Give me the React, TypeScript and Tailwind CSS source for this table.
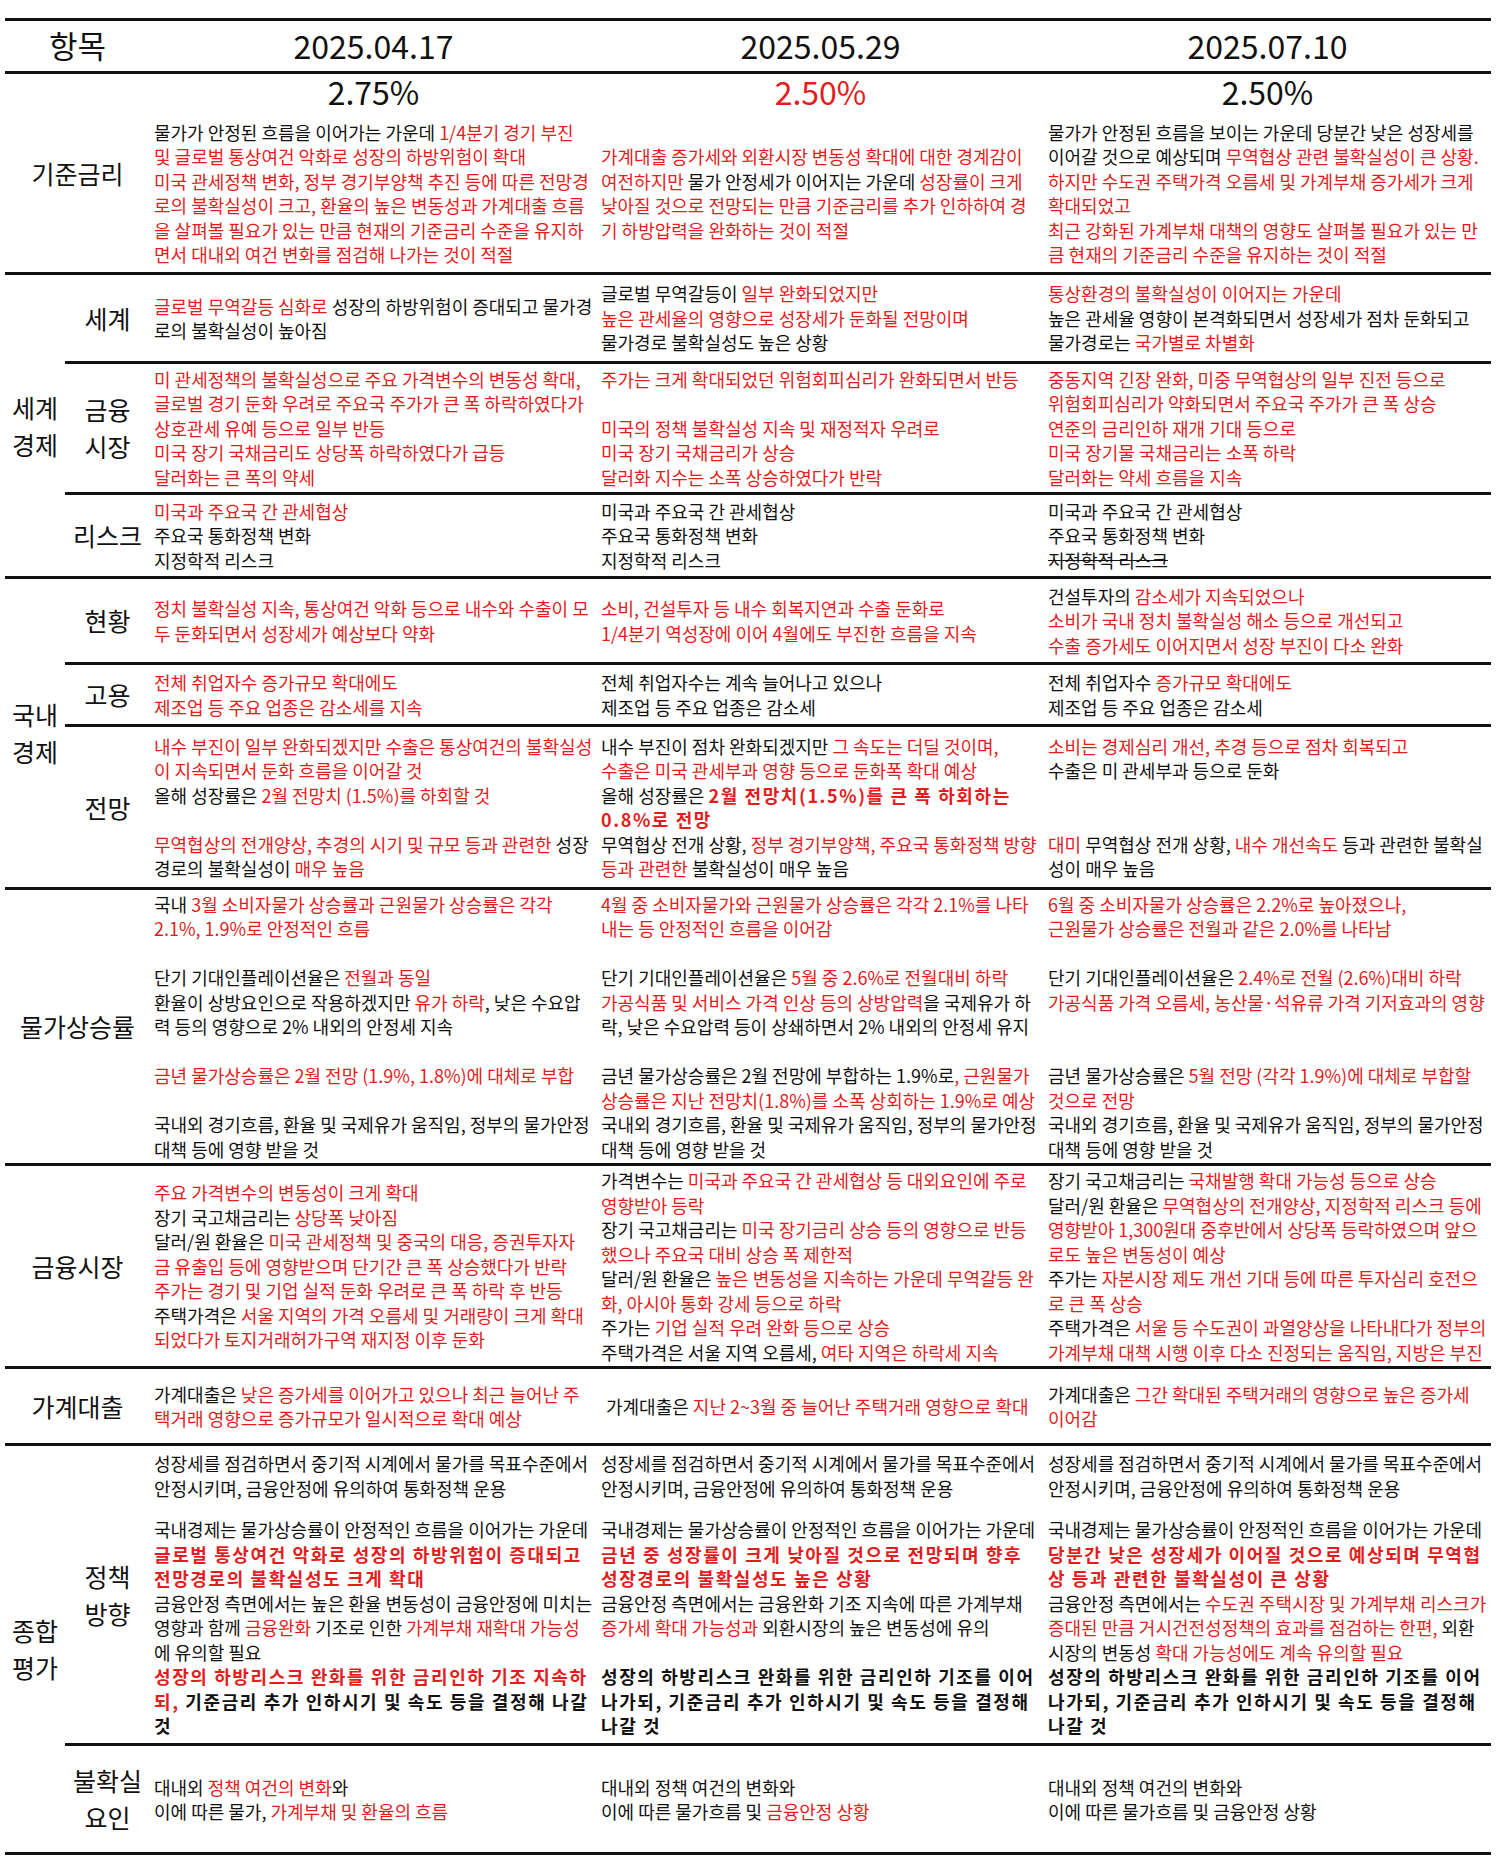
import React from "react";
import clsx from "clsx";

// {red}  《bold red》  【bold black】  「strike」   "" = empty line, "_" = small gap
const parse = (s: string) =>
  s
    .split(/(\{[^}]*\}|《[^》]*》|【[^】]*】|「[^」]*」)/g)
    .filter((p) => p !== "")
    .map((p) => {
      if (p.startsWith("{")) return { t: p.slice(1, -1), red: true };
      if (p.startsWith("《")) return { t: p.slice(1, -1), red: true, bold: true };
      if (p.startsWith("【")) return { t: p.slice(1, -1), bold: true };
      if (p.startsWith("「")) return { t: p.slice(1, -1), strike: true };
      return { t: p };
    });

const TextLine = ({ s }: { s: string }) => {
  if (s === "") return <div className="h-[24.5px]" />;
  if (s === "_") return <div className="h-[17px]" />;
  return (
    <div className="whitespace-pre leading-[24.5px]">
      {parse(s).map((seg, i) => (
        <span
          key={i}
          className={clsx(
            seg.red && "text-[#e31d1d]",
            seg.bold && "font-bold tracking-[1.6px]",
            seg.strike && "line-through"
          )}
        >
          {seg.t}
        </span>
      ))}
    </div>
  );
};

const Cell = ({ lines, className }: { lines: string[]; className?: string }) => (
  <div className={clsx("flex flex-col justify-center pl-[4px]", className)}>
    {lines.map((l, i) => (
      <TextLine key={i} s={l} />
    ))}
  </div>
);

const Label = ({ children }: { children: React.ReactNode }) => (
  <div className="flex items-center justify-center text-center text-[25px] leading-[37px]">
    {children}
  </div>
);

type Sub = { label: React.ReactNode; h: string; cols: string[][]; last?: boolean };

const SubRow = ({ row }: { row: Sub }) => (
  <div
    className={clsx(
      "grid grid-cols-[85px_repeat(3,447px)]",
      row.h,
      !row.last && "border-b-[3px] border-[#111]"
    )}
  >
    <Label>{row.label}</Label>
    {row.cols.map((c, i) => (
      <Cell key={i} lines={c} />
    ))}
  </div>
);

const Group = ({ label, rows }: { label: React.ReactNode; rows: Sub[] }) => (
  <div className="grid grid-cols-[60px_1fr] border-b-[3px] border-[#111]">
    <Label>{label}</Label>
    <div className="flex flex-col">
      {rows.map((r, i) => (
        <SubRow key={i} row={r} />
      ))}
    </div>
  </div>
);

const Single = ({ label, h, cols }: { label: string; h: string; cols: string[][] }) => (
  <div className={clsx("grid grid-cols-[145px_repeat(3,447px)] border-b-[3px] border-[#111]", h)}>
    <Label>{label}</Label>
    {cols.map((c, i) => (
      <Cell key={i} lines={c} className={i === 1 && label === "가계대출" ? "pl-[9px]" : undefined} />
    ))}
  </div>
);

const world: Sub[] = [
  {
    label: "세계",
    h: "h-[89px]",
    cols: [
      ["{글로벌 무역갈등 심화로} 성장의 하방위험이 증대되고 물가경", "로의 불확실성이 높아짐"],
      ["글로벌 무역갈등이 {일부 완화되었지만}", "{높은 관세율의 영향으로 성장세가 둔화될 전망이며}", "물가경로 불확실성도 높은 상황"],
      ["{통상환경의 불확실성이 이어지는 가운데}", "높은 관세율 영향이 본격화되면서 성장세가 점차 둔화되고", "물가경로는 {국가별로 차별화}"],
    ],
  },
  {
    label: (
      <>
        금융
        <br />
        시장
      </>
    ),
    h: "h-[131px]",
    cols: [
      [
        "{미 관세정책의 불확실성으로 주요 가격변수의 변동성 확대,}",
        "{글로벌 경기 둔화 우려로 주요국 주가가 큰 폭 하락하였다가}",
        "{상호관세 유예 등으로 일부 반등}",
        "{미국 장기 국채금리도 상당폭 하락하였다가 급등}",
        "{달러화는 큰 폭의 약세}",
      ],
      [
        "{주가는 크게 확대되었던 위험회피심리가 완화되면서 반등}",
        "",
        "{미국의 정책 불확실성 지속 및 재정적자 우려로}",
        "{미국 장기 국채금리가 상승}",
        "{달러화 지수는 소폭 상승하였다가 반락}",
      ],
      [
        "{중동지역 긴장 완화, 미중 무역협상의 일부 진전 등으로}",
        "{위험회피심리가 약화되면서 주요국 주가가 큰 폭 상승}",
        "{연준의 금리인하 재개 기대 등으로}",
        "{미국 장기물 국채금리는 소폭 하락}",
        "{달러화는 약세 흐름을 지속}",
      ],
    ],
  },
  {
    label: "리스크",
    h: "h-[81px]",
    last: true,
    cols: [
      ["{미국과 주요국 간 관세협상}", "주요국 통화정책 변화", "지정학적 리스크"],
      ["미국과 주요국 간 관세협상", "주요국 통화정책 변화", "지정학적 리스크"],
      ["미국과 주요국 간 관세협상", "주요국 통화정책 변화", "「지정학적 리스크」"],
    ],
  },
];

const domestic: Sub[] = [
  {
    label: "현황",
    h: "h-[86px]",
    cols: [
      ["{정치 불확실성 지속, 통상여건 악화 등으로 내수와 수출이 모}", "{두 둔화되면서 성장세가 예상보다 약화}"],
      ["{소비, 건설투자 등 내수 회복지연과 수출 둔화로}", "{1/4분기 역성장에 이어 4월에도 부진한 흐름을 지속}"],
      ["건설투자의 {감소세가 지속되었으나}", "{소비가 국내 정치 불확실성 해소 등으로 개선되고}", "{수출 증가세도 이어지면서 성장 부진이 다소 완화}"],
    ],
  },
  {
    label: "고용",
    h: "h-[62px]",
    cols: [
      ["{전체 취업자수 증가규모 확대에도}", "{제조업 등 주요 업종은 감소세를 지속}"],
      ["전체 취업자수는 계속 늘어나고 있으나", "제조업 등 주요 업종은 감소세"],
      ["전체 취업자수 {증가규모 확대에도}", "제조업 등 주요 업종은 감소세"],
    ],
  },
  {
    label: "전망",
    h: "h-[160px]",
    last: true,
    cols: [
      [
        "{내수 부진이 일부 완화되겠지만 수출은 통상여건의 불확실성}",
        "{이 지속되면서 둔화 흐름을 이어갈 것}",
        "올해 성장률은 {2월 전망치 (1.5%)를 하회할 것}",
        "",
        "{무역협상의 전개양상, 추경의 시기 및 규모 등과 관련한} 성장",
        "경로의 불확실성이 {매우 높음}",
      ],
      [
        "내수 부진이 점차 완화되겠지만 {그 속도는 더딜 것이며,}",
        "{수출은 미국 관세부과 영향 등으로 둔화폭 확대 예상}",
        "올해 성장률은 《2월 전망치(1.5%)를 큰 폭 하회하는》",
        "《0.8%로 전망》",
        "무역협상 전개 상황, {정부 경기부양책, 주요국 통화정책 방향}",
        "{등과 관련한} 불확실성이 매우 높음",
      ],
      [
        "{소비는 경제심리 개선, 추경 등으로 점차 회복되고}",
        "수출은 미 관세부과 등으로 둔화",
        "",
        "",
        "{대미} 무역협상 전개 상황, {내수 개선속도} 등과 관련한 불확실",
        "성이 매우 높음",
      ],
    ],
  },
];

const prices = [
  [
    "국내 {3월 소비자물가 상승률과 근원물가 상승률은 각각}",
    "{2.1%, 1.9%로 안정적인 흐름}",
    "",
    "단기 기대인플레이션율은 {전월과 동일}",
    "환율이 상방요인으로 작용하겠지만 {유가 하락}, 낮은 수요압",
    "력 등의 영향으로 2% 내외의 안정세 지속",
    "",
    "{금년 물가상승률은 2월 전망 (1.9%, 1.8%)에 대체로 부합}",
    "",
    "국내외 경기흐름, 환율 및 국제유가 움직임, 정부의 물가안정",
    "대책 등에 영향 받을 것",
  ],
  [
    "{4월 중 소비자물가와 근원물가 상승률은 각각 2.1%를 나타}",
    "{내는 등 안정적인 흐름을 이어감}",
    "",
    "단기 기대인플레이션율은 {5월 중 2.6%로 전월대비 하락}",
    "{가공식품 및 서비스 가격 인상 등의 상방압력}을 국제유가 하",
    "락, 낮은 수요압력 등이 상쇄하면서 2% 내외의 안정세 유지",
    "",
    "금년 물가상승률은 2월 전망에 부합하는 1.9%로{, 근원물가}",
    "{상승률은 지난 전망치(1.8%)를 소폭 상회하는 1.9%로 예상}",
    "국내외 경기흐름, 환율 및 국제유가 움직임, 정부의 물가안정",
    "대책 등에 영향 받을 것",
  ],
  [
    "{6월 중 소비자물가 상승률은 2.2%로 높아졌으나,}",
    "{근원물가 상승률은 전월과 같은 2.0%를 나타남}",
    "",
    "단기 기대인플레이션율은 {2.4%로 전월 (2.6%)대비 하락}",
    "{가공식품 가격 오름세, 농산물·석유류 가격 기저효과의 영향}",
    "",
    "",
    "금년 물가상승률은 {5월 전망 (각각 1.9%)에 대체로 부합할}",
    "{것으로 전망}",
    "국내외 경기흐름, 환율 및 국제유가 움직임, 정부의 물가안정",
    "대책 등에 영향 받을 것",
  ],
];

const markets = [
  [
    "{주요 가격변수의 변동성이 크게 확대}",
    "장기 국고채금리는 {상당폭 낮아짐}",
    "달러/원 환율은 {미국 관세정책 및 중국의 대응, 증권투자자}",
    "{금 유출입 등에 영향받으며 단기간 큰 폭 상승했다가 반락}",
    "{주가는 경기 및 기업 실적 둔화 우려로 큰 폭 하락 후 반등}",
    "주택가격은 {서울 지역의 가격 오름세 및 거래량이 크게 확대}",
    "{되었다가 토지거래허가구역 재지정 이후 둔화}",
  ],
  [
    "가격변수는 {미국과 주요국 간 관세협상 등 대외요인에 주로}",
    "{영향받아 등락}",
    "장기 국고채금리는 {미국 장기금리 상승 등의 영향으로 반등}",
    "{했으나 주요국 대비 상승 폭 제한적}",
    "달러/원 환율은 {높은 변동성을 지속하는 가운데 무역갈등 완}",
    "{화, 아시아 통화 강세 등으로 하락}",
    "주가는 {기업 실적 우려 완화 등으로 상승}",
    "주택가격은 서울 지역 오름세, {여타 지역은 하락세 지속}",
  ],
  [
    "장기 국고채금리는 {국채발행 확대 가능성 등으로 상승}",
    "달러/원 환율은 {무역협상의 전개양상, 지정학적 리스크 등에}",
    "{영향받아 1,300원대 중후반에서 상당폭 등락하였으며 앞으}",
    "{로도 높은 변동성이 예상}",
    "주가는 {자본시장 제도 개선 기대 등에 따른 투자심리 호전으}",
    "{로 큰 폭 상승}",
    "주택가격은 {서울 등 수도권이 과열양상을 나타내다가 정부의}",
    "{가계부채 대책 시행 이후 다소 진정되는 움직임, 지방은 부진}",
  ],
];

const loans = [
  ["가계대출은 {낮은 증가세를 이어가고 있으나 최근 늘어난 주}", "{택거래 영향으로 증가규모가 일시적으로 확대 예상}"],
  ["가계대출은 {지난 2~3월 중 늘어난 주택거래 영향으로 확대}"],
  ["가계대출은 {그간 확대된 주택거래의 영향으로 높은 증가세}", "{이어감}"],
];

const policyHead = [
  "성장세를 점검하면서 중기적 시계에서 물가를 목표수준에서",
  "안정시키며, 금융안정에 유의하여 통화정책 운용",
  "_",
  "국내경제는 물가상승률이 안정적인 흐름을 이어가는 가운데",
];

const overall: Sub[] = [
  {
    label: (
      <>
        정책
        <br />
        방향
      </>
    ),
    h: "h-[300px]",
    cols: [
      [
        ...policyHead,
        "《글로벌 통상여건 악화로 성장의 하방위험이 증대되고》",
        "《전망경로의 불확실성도 크게 확대》",
        "금융안정 측면에서는 높은 환율 변동성이 금융안정에 미치는",
        "영향과 함께 {금융완화} 기조로 인한 {가계부채 재확대 가능성}",
        "에 유의할 필요",
        "《성장의 하방리스크 완화를 위한 금리인하 기조 지속하》",
        "《되,》【 기준금리 추가 인하시기 및 속도 등을 결정해 나갈】",
        "【것】",
      ],
      [
        ...policyHead,
        "《금년 중 성장률이 크게 낮아질 것으로 전망되며 향후》",
        "《성장경로의 불확실성도 높은 상황》",
        "금융안정 측면에서는 금융완화 기조 지속에 따른 가계부채",
        "{증가세 확대 가능성과} 외환시장의 높은 변동성에 유의",
        "",
        "【성장의 하방리스크 완화를 위한 금리인하 기조를 이어】",
        "【나가되, 기준금리 추가 인하시기 및 속도 등을 결정해】",
        "【나갈 것】",
      ],
      [
        ...policyHead,
        "《당분간 낮은 성장세가 이어질 것으로 예상되며 무역협》",
        "《상 등과 관련한 불확실성이 큰 상황》",
        "금융안정 측면에서는 {수도권 주택시장 및 가계부채 리스크가}",
        "{증대된 만큼 거시건전성정책의 효과를 점검하는 한편,} 외환",
        "시장의 변동성 {확대 가능성에도 계속 유의할 필요}",
        "【성장의 하방리스크 완화를 위한 금리인하 기조를 이어】",
        "【나가되, 기준금리 추가 인하시기 및 속도 등을 결정해】",
        "【나갈 것】",
      ],
    ],
  },
  {
    label: (
      <>
        불확실
        <br />
        요인
      </>
    ),
    h: "h-[106px]",
    last: true,
    cols: [
      ["대내외 {정책 여건의 변화}와", "이에 따른 물가, {가계부채 및 환율의 흐름}"],
      ["대내외 정책 여건의 변화와", "이에 따른 물가흐름 및 {금융안정 상황}"],
      ["대내외 정책 여건의 변화와", "이에 따른 물가흐름 및 금융안정 상황"],
    ],
  },
];

export default function App() {
  return (
    <div className="min-h-screen bg-white pt-[18px] font-['Noto_Sans_CJK_KR',sans-serif] text-[18px] text-[#111]">
      <div className="ml-[5px] w-[1486px] border-t-[3px] border-[#111]">
        {/* header */}
        <div className="grid h-[53px] grid-cols-[145px_repeat(3,447px)] items-center border-b-[3px] border-[#111] pb-[7px] text-center">
          <div className="text-[31px]">항목</div>
          <div className="text-[32px]">2025.04.17</div>
          <div className="text-[32px]">2025.05.29</div>
          <div className="text-[32px]">2025.07.10</div>
        </div>

        {/* 기준금리 */}
        <div className="grid h-[201px] grid-cols-[145px_1fr] border-b-[3px] border-[#111]">
          <Label>기준금리</Label>
          <div className="flex flex-col">
            <div className="grid h-[40px] grid-cols-3 items-start pt-[1px] text-center text-[32px] leading-[32px]">
              <div>2.75%</div>
              <div className="text-[#e31d1d]">2.50%</div>
              <div>2.50%</div>
            </div>
            <div className="grid flex-1 grid-cols-3">
              <Cell
                lines={[
                  "물가가 안정된 흐름을 이어가는 가운데 {1/4분기 경기 부진}",
                  "{및 글로벌 통상여건 악화로 성장의 하방위험이 확대}",
                  "{미국 관세정책 변화, 정부 경기부양책 추진 등에 따른 전망경}",
                  "{로의 불확실성이 크고, 환율의 높은 변동성과 가계대출 흐름}",
                  "{을 살펴볼 필요가 있는 만큼 현재의 기준금리 수준을 유지하}",
                  "{면서 대내외 여건 변화를 점검해 나가는 것이 적절}",
                ]}
              />
              <Cell
                lines={[
                  "{가계대출 증가세와 외환시장 변동성 확대에 대한 경계감이}",
                  "{여전하지만} 물가 안정세가 이어지는 가운데 {성장률이 크게}",
                  "{낮아질 것으로 전망되는 만큼 기준금리를 추가 인하하여 경}",
                  "{기 하방압력을 완화하는 것이 적절}",
                ]}
              />
              <Cell
                lines={[
                  "물가가 안정된 흐름을 보이는 가운데 당분간 낮은 성장세를",
                  "이어갈 것으로 예상되며 {무역협상 관련 불확실성이 큰 상황.}",
                  "{하지만 수도권 주택가격 오름세 및 가계부채 증가세가 크게}",
                  "{확대되었고}",
                  "{최근 강화된 가계부채 대책의 영향도 살펴볼 필요가 있는 만}",
                  "{큼 현재의 기준금리 수준을 유지하는 것이 적절}",
                ]}
              />
            </div>
          </div>
        </div>

        <Group
          label={
            <>
              세계
              <br />
              경제
            </>
          }
          rows={world}
        />
        <Group
          label={
            <>
              국내
              <br />
              경제
            </>
          }
          rows={domestic}
        />
        <Single label="물가상승률" h="h-[276px]" cols={prices} />
        <Single label="금융시장" h="h-[203px]" cols={markets} />
        <Single label="가계대출" h="h-[77px]" cols={loans} />
        <Group
          label={
            <>
              종합
              <br />
              평가
            </>
          }
          rows={overall}
        />
      </div>
    </div>
  );
}
